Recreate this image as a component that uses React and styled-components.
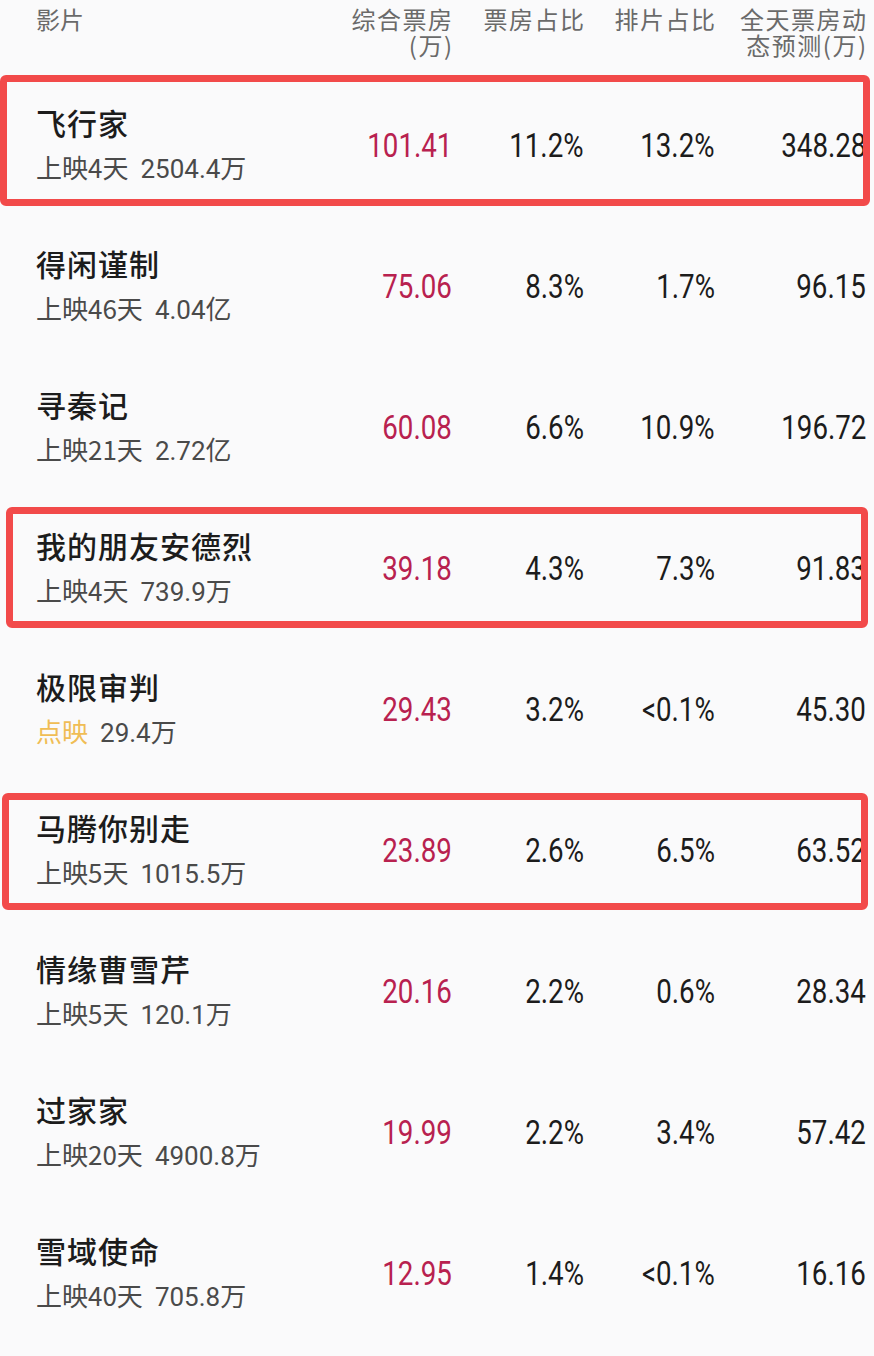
import React from "react";
import styled, { createGlobalStyle } from "styled-components";

const GlobalStyle = createGlobalStyle`
  html, body {
    margin: 0;
    padding: 0;
    background: #fafafb;
  }
  body {
    font-family: "Noto Sans CJK SC", "Noto Sans", sans-serif;
    color: #1c1c1c;
  }
`;

const NUM_FONT = `Roboto, "Noto Sans CJK SC", sans-serif`;

const movies = [
  { name: "飞行家", tag: "上映4天", total: "2504.4万", box: "101.41", share: "11.2%", sched: "13.2%", forecast: "348.28", mark: { top: 0, right: 4, bottom: 10, left: 0 } },
  { name: "得闲谨制", tag: "上映46天", total: "4.04亿", box: "75.06", share: "8.3%", sched: "1.7%", forecast: "96.15" },
  { name: "寻秦记", tag: "上映21天", total: "2.72亿", box: "60.08", share: "6.6%", sched: "10.9%", forecast: "196.72" },
  { name: "我的朋友安德烈", tag: "上映4天", total: "739.9万", box: "39.18", share: "4.3%", sched: "7.3%", forecast: "91.83", mark: { top: 9, right: 6, bottom: 11, left: 6 } },
  { name: "极限审判", tag: "点映", preview: true, total: "29.4万", box: "29.43", share: "3.2%", sched: "<0.1%", forecast: "45.30" },
  { name: "马腾你别走", tag: "上映5天", total: "1015.5万", box: "23.89", share: "2.6%", sched: "6.5%", forecast: "63.52", mark: { top: 13, right: 6, bottom: 11, left: 2 } },
  { name: "情缘曹雪芹", tag: "上映5天", total: "120.1万", box: "20.16", share: "2.2%", sched: "0.6%", forecast: "28.34" },
  { name: "过家家", tag: "上映20天", total: "4900.8万", box: "19.99", share: "2.2%", sched: "3.4%", forecast: "57.42" },
  { name: "雪域使命", tag: "上映40天", total: "705.8万", box: "12.95", share: "1.4%", sched: "<0.1%", forecast: "16.16" },
];

export default function App() {
  return (
    <Page>
      <GlobalStyle />
      <Header>
        <HeadCell $left>影片</HeadCell>
        <HeadCell>
          <HeadLine>综合票房</HeadLine>
          <HeadLine>(万)</HeadLine>
        </HeadCell>
        <HeadCell>
          <HeadLine>票房占比</HeadLine>
        </HeadCell>
        <HeadCell>
          <HeadLine>排片占比</HeadLine>
        </HeadCell>
        <HeadCell>
          <HeadLine>全天票房动</HeadLine>
          <HeadLine>态预测(万)</HeadLine>
        </HeadCell>
      </Header>
      {movies.map((m) => (
        <Row key={m.name} $mark={m.mark}>
          <NameCell>
            <Title>{m.name}</Title>
            <Sub>
              <Tag $preview={m.preview}>{m.tag}</Tag>
              <SubNum>{m.total.slice(0, -1)}</SubNum>
              {m.total.slice(-1)}
            </Sub>
          </NameCell>
          <NumCell>
            <Num $hot>{m.box}</Num>
          </NumCell>
          <NumCell>
            <Num>{m.share}</Num>
          </NumCell>
          <NumCell>
            <Num>{m.sched}</Num>
          </NumCell>
          <NumCell>
            <Num>{m.forecast}</Num>
          </NumCell>
        </Row>
      ))}
    </Page>
  );
}

const Page = styled.div`
  width: 874px;
  min-height: 1356px;
  background: #fafafb;
`;

const Grid = styled.div`
  display: grid;
  grid-template-columns: 1fr 132px 132px 131px 151px;
  padding: 0 8px 0 36px;
`;

const Header = styled(Grid)`
  height: 75px;
  padding-top: 6px;
  box-sizing: border-box;
  align-items: start;
`;

const HeadCell = styled.div`
  display: flex;
  flex-direction: column;
  align-items: ${(p) => (p.$left ? "flex-start" : "flex-end")};
  font-size: 24px;
  line-height: 26px;
  color: #6a6a6a;
  white-space: nowrap;
`;

const HeadLine = styled.span`
  display: block;
  letter-spacing: 1.5px;
  margin-right: -1.5px;
`;

const Row = styled(Grid)`
  position: relative;
  height: 141px;
  align-items: center;

  ${(p) =>
    p.$mark &&
    `
    &::after {
      content: "";
      position: absolute;
      top: ${p.$mark.top}px;
      right: ${p.$mark.right}px;
      bottom: ${p.$mark.bottom}px;
      left: ${p.$mark.left}px;
      border: 7px solid #f24a4a;
      border-radius: 6px;
      pointer-events: none;
    }
  `}
`;

const NameCell = styled.div`
  display: flex;
  flex-direction: column;
  gap: 8px;
  padding-bottom: 2px;
`;

const Title = styled.div`
  font-size: 30px;
  line-height: 38px;
  font-weight: 500;
  color: #1c1c1c;
  letter-spacing: 1px;
  white-space: nowrap;
`;

const Sub = styled.div`
  font-size: 26px;
  line-height: 36px;
  color: #4a4a4a;
  white-space: nowrap;
`;

const Tag = styled.span`
  margin-right: 12px;
  color: ${(p) => (p.$preview ? "#f0bd55" : "#4a4a4a")};
`;

const SubNum = styled.span`
  font-family: ${NUM_FONT};
  font-size: 26px;
`;

const NumCell = styled.div`
  display: flex;
  justify-content: flex-end;
`;

const Num = styled.span`
  display: inline-block;
  font-family: ${NUM_FONT};
  font-size: 33px;
  line-height: 40px;
  transform: scaleX(0.84);
  transform-origin: right center;
  color: ${(p) => (p.$hot ? "#b8214f" : "#1c1c1c")};
  white-space: nowrap;
`;
